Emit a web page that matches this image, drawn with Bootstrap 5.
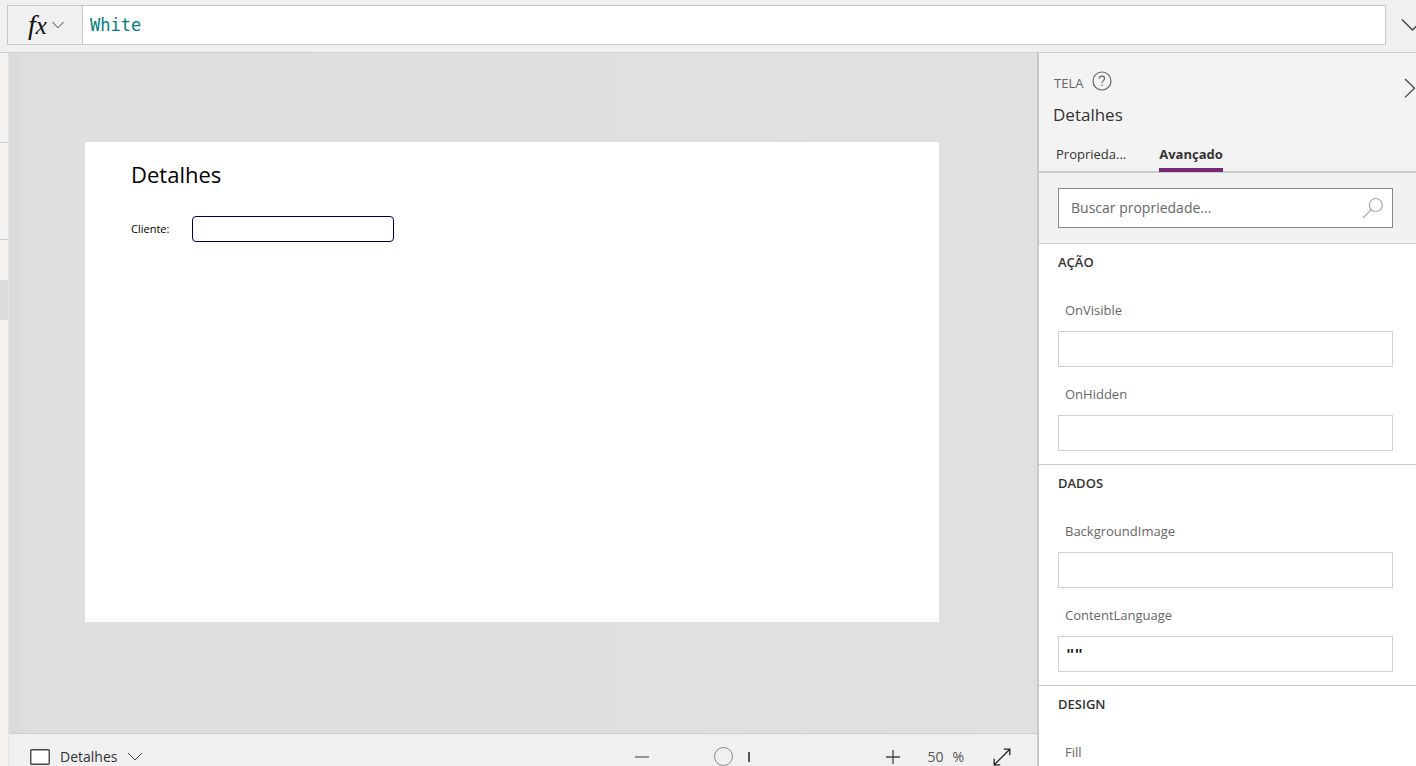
<!DOCTYPE html>
<html lang="pt-BR">
<head>
<meta charset="utf-8">
<meta name="viewport" content="width=device-width, initial-scale=1">
<title>Detalhes</title>
<link href="https://cdn.jsdelivr.net/npm/bootstrap@5.3.0/dist/css/bootstrap.min.css" rel="stylesheet">
<style>
  body { font-family: "Open Sans", "Noto Sans", sans-serif; font-size: 14px; line-height: 20px; color: #333; background: #f0f0f0; }
  svg { display: block; fill: none; stroke: #444; flex: none; }
  .bare { border: 0; padding: 0; background: none; color: inherit; }
  input { min-width: 0; }

  .formula-bar { height: 53px; padding: 5px 0 7px 7px; border-bottom: 1px solid #cfcfcf; }
  .formula-box { border: 1px solid #c8c8c8; background: #fff; }
  .fx-btn { width: 75px; background: #f0f0f0; border-right: 1px solid #c8c8c8; gap: 5px; padding-left: 2px; }
  .fx-sign { font: italic 28px/30px "Liberation Serif", serif; color: #111; }
  .fx-sign span { font-size: 25px; }
  .formula-input { font: 17px/24px "DejaVu Sans Mono", monospace; color: #007d7d; padding: 0 7px; }
  .formula-more { width: 30px; padding-left: 15px; }

  .rail { width: 9px; background: #f3f2f0; border-right: 1px solid #e4e4e4; }
  .rail-gap { height: 89px; }
  .rail-part { height: 97px; border-top: 1px solid #cfcfcf; }
  .rail-last { padding-top: 40px; }
  .rail-on { height: 40px; background: #dcdcdc; }

  .stage { background: linear-gradient(90deg, #d9d9d9, #dfdfdf 24px, #e0e0e0); padding: 0 22px 22px 0; }
  .artboard { width: 854px; max-width: 100%; aspect-ratio: 854 / 480; background: #fff; padding: 16px 46px; color: #000; }
  .artboard-title { font-size: 22px; line-height: 32px; margin: 0 0 26px; font-weight: 400; }
  .client-label { width: 61px; font-size: 11px; }
  .client-input { width: 202px; height: 26px; border: 1px solid #00004f; border-radius: 4px; background: #fff; padding: 0 8px; }

  .status-bar { height: 48px; margin-bottom: -15px; border-top: 1px solid #cfcfcf; background: #f0f0f0; padding: 0 26px 2px 21px; font-size: 14px; }
  .screen-pick { gap: 10px; }
  .zoom-range { width: 200px; margin: 0 22px 0 15px; }
  .zoom-range input { width: 100%; height: 20px; margin: 0; display: block; appearance: none; background: none; }
  .zoom-range input::-webkit-slider-thumb { appearance: none; width: 19px; height: 19px; border: 1px solid #8a8a8a; border-radius: 50%; background: #f0f0f0; }
  .zoom-tick { top: 5px; left: 42%; width: 2px; height: 10px; background: #555; pointer-events: none; }
  .zoom-value { gap: 9px; color: #555; margin: 0 29px 0 27px; }

  .props { width: 379px; border-left: 2px solid #c8c8c8; background: #fff; }
  .props-head { height: 120px; background: #f3f3f3; border-bottom: 2px solid #cbcbcb; padding: 18px 0 0 14px; }
  .kind { font-size: 13px; color: #666; padding: 2px 1px; }
  .item-name { font-size: 17px; line-height: 24px; margin: 8px 0 0; font-weight: 400; }
  .panel-next { padding-top: 7px; }
  .prop-tabs { font-size: 13px; gap: 33px; padding-left: 3px; margin-top: 17px; }
  .prop-tabs a { color: #333; text-decoration: none; padding-bottom: 4px; border-bottom: 4px solid transparent; }
  .prop-tabs a.current { font-weight: 700; border-color: #742774; }
  .search-area { background: #f1f1f1; border-bottom: 1px solid #d0d0d0; padding: 15px 23px 15px 19px; }
  .search-box { height: 40px; border: 1px solid #888; background: #fff; padding: 0 8px 0 12px; }
  .search-box input { font-size: 14px; }
  .search-box input::placeholder { color: #666; opacity: 1; }
  .prop-group { padding: 8px 23px 13px 19px; border-bottom: 1px solid #c8c8c8; }
  .prop-group h2 { font-size: 13px; line-height: 20px; font-weight: 600; margin: 0 0 28px; }
  .prop-group label { font-size: 13px; color: #666; padding-left: 7px; margin-bottom: 11px; display: block; }
  .prop-group input { display: block; width: 100%; height: 36px; border: 1px solid #d0d0d0; padding: 0 7px; font: bold 14px/20px "DejaVu Sans Mono", monospace; color: #111; }
  .prop-group input + label { margin-top: 17px; }
</style>
</head>
<body class="vh-100 overflow-hidden d-flex flex-column">
<header class="formula-bar d-flex flex-shrink-0">
  <div class="formula-box d-flex flex-grow-1">
    <button class="fx-btn bare d-flex align-items-center justify-content-center" type="button" aria-label="fx">
      <span class="fx-sign">f<span>x</span></span>
      <svg width="12" height="8" viewBox="0 0 12 8"><path d="M.5 1 6 6.8 11.5 1"/></svg>
    </button>
    <input class="formula-input bare flex-grow-1" type="text" value="White" aria-label="Fórmula">
  </div>
  <button class="formula-more bare d-flex align-items-center overflow-hidden" type="button" aria-label="Expandir">
    <svg width="22" height="14" viewBox="0 0 22 14" stroke-width="1.4"><path d="M1 1.5 11.5 12 22 1.5"/></svg>
  </button>
</header>

<div class="d-flex flex-grow-1 overflow-hidden">
  <div class="rail flex-shrink-0">
    <div class="rail-gap"></div>
    <div class="rail-part"></div>
    <div class="rail-part rail-last"><div class="rail-on"></div></div>
  </div>

  <main class="d-flex flex-column flex-grow-1">
    <div class="stage d-flex flex-grow-1 align-items-center justify-content-center">
      <section class="artboard">
        <h1 class="artboard-title">Detalhes</h1>
        <div class="d-flex align-items-center">
          <label class="client-label" for="cliente">Cliente:</label>
          <input class="client-input" id="cliente" type="text">
        </div>
      </section>
    </div>
    <footer class="status-bar d-flex align-items-center flex-shrink-0">
      <button class="screen-pick bare d-flex align-items-center me-auto" type="button">
        <svg width="20" height="16" viewBox="0 0 20 16"><rect x=".75" y=".75" width="18.5" height="14.5" rx="1" fill="#fff" stroke-width="1.4"/></svg>
        <span>Detalhes</span>
        <svg width="16" height="9" viewBox="0 0 16 9"><path d="M1 1 8 8 15 1"/></svg>
      </button>
      <button class="bare" type="button" aria-label="Reduzir">
        <svg width="14" height="14" viewBox="0 0 14 14"><path d="M0 7H14" stroke="#777" stroke-width="1.5"/></svg>
      </button>
      <div class="zoom-range position-relative">
        <input type="range" min="0" max="1000" value="275" aria-label="Zoom">
        <span class="zoom-tick position-absolute"></span>
      </div>
      <button class="bare" type="button" aria-label="Ampliar">
        <svg width="14" height="14" viewBox="0 0 14 14" stroke-width="1.3"><path d="M0 7H14M7 0V14"/></svg>
      </button>
      <div class="zoom-value d-flex"><span>50</span><span>%</span></div>
      <button class="bare" type="button" aria-label="Ajustar à janela">
        <svg width="18" height="18" viewBox="0 0 18 18" stroke-width="1.3"><path stroke="#222" d="M1.2 16.8 16.8 1.2M10.8 1.2H16.8V7.2M1.2 10.8V16.8H7.2"/></svg>
      </button>
    </footer>
  </main>

  <aside class="props flex-shrink-0 overflow-hidden">
    <div class="props-head">
      <div class="d-flex">
        <div class="flex-grow-1">
          <div class="d-flex gap-2 align-items-start">
            <span class="kind">TELA</span>
            <button class="bare" type="button" aria-label="Ajuda">
              <svg width="20" height="20" viewBox="0 0 20 20" stroke-width="1.2"><g stroke="#666"><circle cx="10" cy="10" r="9"/><path d="M7.3 7.6C7.3 6 8.4 5.1 10 5.1S12.6 6.1 12.6 7.5C12.6 9.6 10 9.6 10 12M10 13.6V15.1"/></g></svg>
            </button>
          </div>
          <h2 class="item-name">Detalhes</h2>
        </div>
        <button class="panel-next bare align-self-start" type="button" aria-label="Recolher">
          <svg width="12" height="20" viewBox="0 0 12 20" stroke-width="1.3"><path d="M1 1 10.5 10.2 1 19.4"/></svg>
        </button>
      </div>
      <nav class="prop-tabs d-flex">
        <a href="#">Proprieda...</a>
        <a class="current" href="#" aria-current="page">Avançado</a>
      </nav>
    </div>
    <div class="search-area">
      <div class="search-box d-flex align-items-center">
        <input class="bare flex-grow-1" type="search" placeholder="Buscar propriedade..." aria-label="Buscar propriedade">
        <svg width="22" height="22" viewBox="0 0 22 22" stroke-width="1.2"><g stroke="#aaa"><circle cx="13.8" cy="8" r="6.5"/><path d="M9.2 12.6 1 21"/></g></svg>
      </div>
    </div>
    <section class="prop-group">
      <h2>AÇÃO</h2>
      <label for="onvisible">OnVisible</label>
      <input id="onvisible" type="text">
      <label for="onhidden">OnHidden</label>
      <input id="onhidden" type="text">
    </section>
    <section class="prop-group">
      <h2>DADOS</h2>
      <label for="bgimage">BackgroundImage</label>
      <input id="bgimage" type="text">
      <label for="lang">ContentLanguage</label>
      <input id="lang" type="text" value='""'>
    </section>
    <section class="prop-group">
      <h2>DESIGN</h2>
      <label for="fill">Fill</label>
      <input id="fill" type="text">
    </section>
  </aside>
</div>
<script src="https://cdn.jsdelivr.net/npm/bootstrap@5.3.0/dist/js/bootstrap.bundle.min.js"></script>
</body>
</html>
